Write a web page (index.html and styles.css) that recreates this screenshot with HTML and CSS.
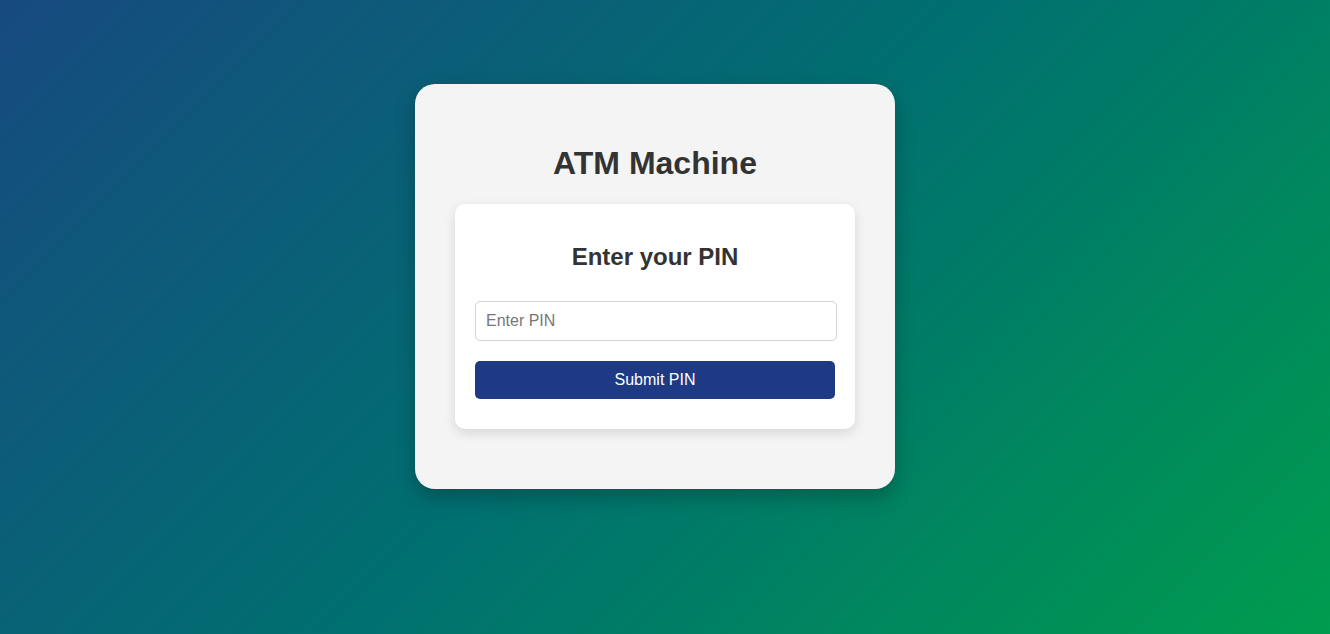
FILE: index.html
```html
<!DOCTYPE html>
<html>
<head>
<meta charset="utf-8">
<title>ATM Machine</title>
<link rel="stylesheet" href="styles.css">
</head>
<body>
<div class="page">
  <div class="atm">
    <h1 class="title">ATM Machine</h1>
    <div class="panel">
      <h2 class="panel-title">Enter your PIN</h2>
      <input class="pin-input" type="password" placeholder="Enter PIN">
      <button class="btn">Submit PIN</button>
    </div>
  </div>
</div>
</body>
</html>
```
FILE: styles.css
```css
html, body {
  margin: 0;
  padding: 0;
  height: 100%;
}
body {
  font-family: "Liberation Sans", Arial, sans-serif;
  background: linear-gradient(135deg, #174a80 0%, #007070 50%, #009c4e 100%);
  background-attachment: fixed;
}
.page {
  display: flex;
  justify-content: center;
  align-items: flex-start;
  padding: 84px 20px 0 0;
  box-sizing: border-box;
  min-height: 100%;
}
.atm {
  width: 480px;
  box-sizing: border-box;
  background: #f4f4f4;
  border-radius: 20px;
  padding: 40px;
  box-shadow: 0 8px 20px rgba(0, 0, 0, 0.25);
}
.title {
  margin: 21px 0 22px;
  font-size: 32px;
  line-height: 37px;
  text-align: center;
  color: #333;
  font-weight: bold;
}
.panel {
  background: #fff;
  border-radius: 10px;
  padding: 20px;
  margin-bottom: 20px;
  box-shadow: 0 4px 12px rgba(0, 0, 0, 0.12);
}
.panel-title {
  margin: 19px 0 30px;
  font-size: 24px;
  line-height: 28px;
  text-align: center;
  color: #333;
}
.pin-input {
  display: block;
  width: 362px;
  height: 40px;
  box-sizing: border-box;
  margin: 0 0 20px;
  padding: 0 10px;
  font-family: inherit;
  font-size: 16px;
  color: #333;
  border: 1px solid #d4d4d4;
  border-radius: 5px;
  background: #fff;
}
.pin-input::placeholder {
  color: #777;
}
.btn {
  display: block;
  width: 360px;
  height: 38px;
  margin: 0 0 10px;
  border: none;
  border-radius: 5px;
  background: #1e3a85;
  color: #fff;
  font-family: inherit;
  font-size: 16px;
  cursor: pointer;
}
```
